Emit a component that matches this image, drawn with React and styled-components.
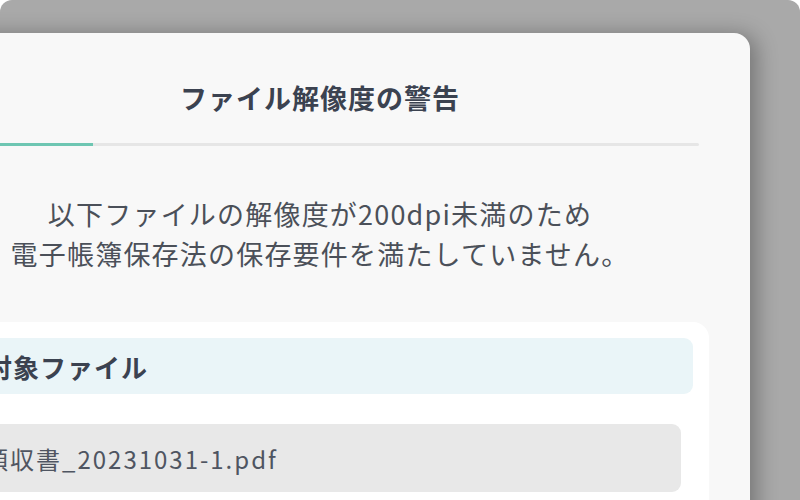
import React from "react";
import styled, { createGlobalStyle } from "styled-components";

const GlobalStyle = createGlobalStyle`
  html, body {
    margin: 0;
    padding: 0;
    background: #ffffff;
  }
  body {
    font-family: "Noto Sans CJK JP", "Noto Sans", sans-serif;
  }
`;

const Frame = styled.div`
  width: 800px;
  height: 500px;
  overflow: hidden;
  background: #a9a9a9;
  border-radius: 12px 12px 0 0;
  padding-top: 33px;
  box-sizing: border-box;
`;

const Modal = styled.div`
  width: 860px;
  margin-left: -110px;
  height: 520px;
  background: #f8f8f8;
  border-radius: 16px 16px 0 0;
  box-shadow: 6px 2px 22px rgba(0, 0, 0, 0.32);
  padding: 45px 41px 0;
  box-sizing: border-box;
  display: flex;
  flex-direction: column;
`;

const Title = styled.h2`
  margin: 0;
  text-align: center;
  font-size: 27px;
  line-height: 39px;
  font-weight: 700;
  letter-spacing: 1px;
  color: #3b4250;
`;

const Progress = styled.div`
  margin: 26px 10px 0;
  height: 3px;
  background: #e6e6e6;
  border-radius: 2px;
  overflow: hidden;
`;

const ProgressFill = styled.div`
  height: 100%;
  background: #6ec6b2;
`;

const Message = styled.p`
  margin: 48px 0 0;
  text-align: center;
  font-size: 27px;
  line-height: 40px;
  letter-spacing: 1.2px;
  color: #4b5059;
`;

const Card = styled.div`
  margin-top: 48px;
  background: #ffffff;
  border-radius: 16px 16px 0 0;
  padding: 16px 16px 0;
  flex: 1;
`;

const CardHeader = styled.div`
  height: 56px;
  display: flex;
  align-items: center;
  padding-left: 39px;
  background: #eaf5f8;
  border-radius: 9px;
  font-size: 26px;
  font-weight: 700;
  letter-spacing: 1px;
  color: #3b4250;
`;

const FileList = styled.div`
  display: flex;
  flex-direction: column;
  gap: 12px;
  padding: 30px 12px 0 0;
`;

const FileRow = styled.div`
  height: 68px;
  display: flex;
  align-items: center;
  padding-left: 37px;
  background: #e8e8e8;
  border-radius: 9px;
  font-size: 24px;
  letter-spacing: 2px;
  color: #4f5561;
`;

const files = ["領収書_20231031-1.pdf"];

export default function App() {
  const progress = 20;
  return (
    <>
      <GlobalStyle />
      <Frame>
        <Modal>
          <Title>ファイル解像度の警告</Title>
          <Progress>
            <ProgressFill style={{ width: `${progress}%` }} />
          </Progress>
          <Message>
            以下ファイルの解像度が200dpi未満のため
            <br />
            電子帳簿保存法の保存要件を満たしていません。
          </Message>
          <Card>
            <CardHeader>対象ファイル</CardHeader>
            <FileList>
              {files.map((name) => (
                <FileRow key={name}>{name}</FileRow>
              ))}
            </FileList>
          </Card>
        </Modal>
      </Frame>
    </>
  );
}
